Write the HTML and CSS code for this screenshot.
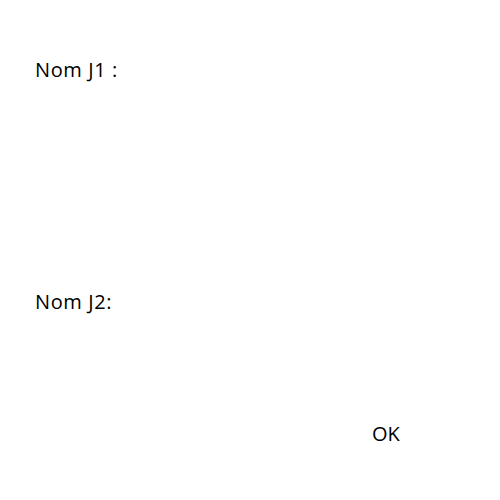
FILE: index.html
```html
<!DOCTYPE html>
<html>
<head>
<meta charset="utf-8">
<link rel="stylesheet" href="styles.css">
</head>
<body>
<div class="form">
  <div class="label first">Nom J1 :</div>
  <div class="label second">Nom J2:</div>
  <div class="actions"><span class="ok">OK</span></div>
</div>
</body>
</html>
```
FILE: styles.css
```css
html, body {
  margin: 0;
  padding: 0;
  background: #ffffff;
}
body {
  font-family: "Open Sans", "Noto Sans", sans-serif;
  font-size: 20px;
  color: #000000;
}
.form {
  display: flex;
  flex-direction: column;
  padding: 57px 0 0 35px;
  width: 465px;
  box-sizing: border-box;
}
.label {
  line-height: 26px;
  letter-spacing: 0.6px;
}
.second {
  margin-top: 206px;
}
.actions {
  display: flex;
  margin-top: 106px;
  padding-left: 337px;
}
.ok {
  line-height: 26px;
}
```
